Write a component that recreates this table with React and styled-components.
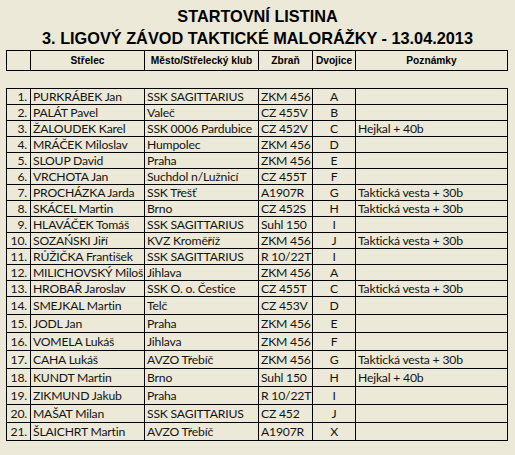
import React from 'react';
import styled, { createGlobalStyle } from 'styled-components';

const GlobalStyle = createGlobalStyle`
  html, body {
    margin: 0;
    padding: 0;
    background: #ece9d8;
  }
`;

const Page = styled.div`
  width: 515px;
  height: 455px;
  overflow: hidden;
  background: #ece9d8;
  color: #111;
`;

const Title = styled.h1`
  margin: 0 0 1px;
  padding-top: 5px;
  font-family: "Liberation Sans", Arial, sans-serif;
  font-size: 16.3px;
  font-weight: bold;
  line-height: 22px;
  text-align: center;
  color: #000;
`;

const Grid = styled.div`
  display: grid;
  grid-template-columns: 23px 113px 113px 53px 42px 151px;
  grid-template-rows: ${({ rows }) => rows};
  gap: 1px;
  width: 500px;
  margin: ${({ offset }) => offset}px 0 0 6px;
  border: 1px solid #000;
  background: #000;
`;

const HeadCell = styled.div`
  background: #ece9d8;
  font-family: "Liberation Sans", Arial, sans-serif;
  font-size: 10.2px;
  font-weight: bold;
  text-align: center;
  line-height: 19px;
  white-space: nowrap;
  color: #000;
`;

const Cell = styled.div`
  background: #ece9d8;
  font-family: Lato, "Noto Sans", sans-serif;
  font-size: 12.2px;
  letter-spacing: -0.2px;
  display: flex;
  align-items: center;
  justify-content: ${({ align }) =>
    align === 'right' ? 'flex-end' : align === 'center' ? 'center' : 'flex-start'};
  padding: 0 ${({ align }) => (align === 'right' ? '3px' : '0')} 0
    ${({ align }) => (align === 'left' ? '2px' : '0')};
  white-space: nowrap;
  color: #141414;
`;

const shooters = [
  ['PURKRÁBEK Jan', 'SSK SAGITTARIUS', 'ZKM 456', 'A', ''],
  ['PALÁT Pavel', 'Valeč', 'CZ 455V', 'B', ''],
  ['ŽALOUDEK Karel', 'SSK 0006 Pardubice', 'CZ 452V', 'C', 'Hejkal + 40b'],
  ['MRÁČEK Miloslav', 'Humpolec', 'ZKM 456', 'D', ''],
  ['SLOUP David', 'Praha', 'ZKM 456', 'E', ''],
  ['VRCHOTA Jan', 'Suchdol n/Lužnicí', 'CZ 455T', 'F', ''],
  ['PROCHÁZKA Jarda', 'SSK Třešť', 'A1907R', 'G', 'Taktická vesta + 30b'],
  ['SKÁCEL Martin', 'Brno', 'CZ 452S', 'H', 'Taktická vesta + 30b'],
  ['HLAVÁČEK Tomáš', 'SSK SAGITTARIUS', 'Suhl 150', 'I', ''],
  ['SOZAŃSKI Jiří', 'KVZ Kroměříž', 'ZKM 456', 'J', 'Taktická vesta + 30b'],
  ['RŮŽIČKA František', 'SSK SAGITTARIUS', 'R 10/22T', 'I', ''],
  ['MILICHOVSKÝ Miloš', 'Jihlava', 'ZKM 456', 'A', ''],
  ['HROBAŘ Jaroslav', 'SSK O. o. Čestice', 'CZ 455T', 'C', 'Taktická vesta + 30b'],
  ['SMEJKAL Martin', 'Telč', 'CZ 453V', 'D', ''],
  ['JODL Jan', 'Praha', 'ZKM 456', 'E', ''],
  ['VOMELA Lukáš', 'Jihlava', 'ZKM 456', 'F', ''],
  ['CAHA Lukáš', 'AVZO Třebíč', 'ZKM 456', 'G', 'Taktická vesta + 30b'],
  ['KUNDT Martin', 'Brno', 'Suhl 150', 'H', 'Hejkal + 40b'],
  ['ZIKMUND Jakub', 'Praha', 'R 10/22T', 'I', ''],
  ['MAŠAT Milan', 'SSK SAGITTARIUS', 'CZ 452', 'J', ''],
  ['ŠLAICHRT Martin', 'AVZO Třebíč', 'A1907R', 'X', ''],
];

const headings = ['', 'Střelec', 'Město/Střelecký klub', 'Zbraň', 'Dvojice', 'Poznámky'];

export default function App() {
  return (
    <Page>
      <GlobalStyle />
      <Title>
        STARTOVNÍ LISTINA
        <br />
        3. LIGOVÝ ZÁVOD TAKTICKÉ MALORÁŽKY - 13.04.2013
      </Title>
      <Grid rows="19px" offset={0}>
        {headings.map((h, i) => (
          <HeadCell key={i}>{h}</HeadCell>
        ))}
      </Grid>
      <Grid rows="repeat(13, 15px) repeat(8, 17px)" offset={17}>
        {shooters.map(([name, club, gun, pair, note], i) => (
          <React.Fragment key={name}>
            <Cell align="right">{i + 1}.</Cell>
            <Cell align="left">{name}</Cell>
            <Cell align="left">{club}</Cell>
            <Cell align="left">{gun}</Cell>
            <Cell align="center">{pair}</Cell>
            <Cell align="left">{note}</Cell>
          </React.Fragment>
        ))}
      </Grid>
    </Page>
  );
}
